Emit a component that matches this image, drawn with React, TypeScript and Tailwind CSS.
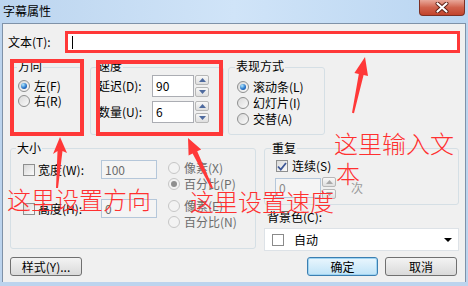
import React from 'react'

function Radio({ checked = false, disabled = false }: { checked?: boolean; disabled?: boolean }) {
  return (
    <span
      className={`w-[12px] h-[12px] shrink-0 rounded-full border flex items-center justify-center ${
        disabled ? 'border-[#c6c6c6] bg-[#f3f3f3]' : 'border-[#8e8f8f] bg-gradient-to-br from-[#d9d9d9] to-[#fbfbfb]'
      }`}
    >
      {checked && (
        <span
          className={`w-[6px] h-[6px] rounded-full ${
            disabled ? 'bg-[#8f8f8f]' : 'bg-[radial-gradient(circle_at_35%_30%,#b4eaff,#2a78cc_55%,#0e3c8a)]'
          }`}
        />
      )}
    </span>
  )
}

function Check({ checked = false }: { checked?: boolean }) {
  return (
    <span className="w-[12px] h-[12px] shrink-0 border border-[#8e8f8f] bg-gradient-to-br from-[#d9d9d9] to-[#fbfbfb] flex items-center justify-center">
      {checked && (
        <svg width="10" height="9" viewBox="0 0 10 9">
          <path d="M1 4.5L3.8 7.5L9 1" fill="none" stroke="#3d5796" strokeWidth="1.8" />
        </svg>
      )}
    </span>
  )
}

function Spin({ disabled = false }: { disabled?: boolean }) {
  const fill = disabled ? '#a9a9a9' : '#4e6a9e'
  return (
    <div className="flex flex-col gap-[2px] ml-[1px]">
      {[0, 1].map((i) => (
        <div
          key={i}
          className="w-[14px] h-[10px] border border-[#b7b7b7] rounded-[2px] bg-gradient-to-b from-[#f8f8f8] to-[#dfdfdf] flex items-center justify-center"
        >
          <svg width="7" height="4" viewBox="0 0 7 4">
            <path d={i === 0 ? 'M3.5 0L7 4H0z' : 'M0 0H7L3.5 4z'} fill={fill} />
          </svg>
        </div>
      ))}
    </div>
  )
}

function Group({
  label,
  className,
  labelClass,
  children,
}: {
  label: string
  className: string
  labelClass: string
  children?: React.ReactNode
}) {
  return (
    <div className={`relative shrink-0 border border-[#d5dfe5] rounded-[3px] ${className}`}>
      <span className={`absolute bg-[#f0f0f0] px-[1px] leading-[14px] ${labelClass}`}>{label}</span>
      {children}
    </div>
  )
}

function RadioRow({ label, checked, disabled, h = 'h-[16px]' }: { label: string; checked?: boolean; disabled?: boolean; h?: string }) {
  return (
    <div className={`flex items-center gap-[4px] ${h}`}>
      <Radio checked={checked} disabled={disabled} />
      <span className={disabled ? 'text-[#6d6d6d]' : ''}>{label}</span>
    </div>
  )
}

export default function App() {
  return (
    <div className="relative w-[468px] h-[286px] overflow-hidden bg-[#bcd4ee] text-[12px] leading-[14px] text-black font-['Noto_Sans_CJK_SC','Liberation_Sans',sans-serif]">
      {/* title bar */}
      <div className="h-[23px] flex justify-between items-start bg-gradient-to-r from-[#bcd5ef] via-[#d0e4f8] to-[#b9d5f1]">
        <span className="pl-[3px] pt-[4px]">字幕属性</span>
        <div className="mr-[3px] w-[46px] h-[16px] rounded-b-[4px] border border-t-0 border-[#7d3024] bg-gradient-to-b from-[#e8a89a] via-[#d0624c] to-[#c2432b] flex items-center justify-center">
          <svg width="14" height="11" viewBox="0 0 14 11">
            <path d="M2.5 1.5L11.5 9.5M11.5 1.5L2.5 9.5" stroke="#5a1e14" strokeWidth="4" strokeLinecap="round" />
            <path d="M2.5 1.5L11.5 9.5M11.5 1.5L2.5 9.5" stroke="#fff" strokeWidth="2.2" strokeLinecap="round" />
          </svg>
        </div>
      </div>

      {/* dialog body */}
      <div className="ml-[2px] w-[464px] h-[259px] border border-b-0 border-[#7f92a8] bg-[#f0f0f0] flex flex-col">
        {/* text row */}
        <div className="flex items-center mt-[7px] h-[22px]">
          <span className="pl-[5px] w-[62px] shrink-0">文本(T):</span>
          <div className="w-[395px] h-[22px] border-[3px] border-[#ff3838] bg-white flex items-center pl-[4px]">
            <span className="w-px h-[13px] bg-black" />
          </div>
        </div>

        {/* direction / speed / mode */}
        <div className="flex items-start mt-[14px] pl-[9px]">
          <Group label="方向" className="w-[70px] h-[68px]" labelClass="left-[4px] -top-[9px]">
            <div className="flex flex-col pt-[10px] pl-[5px]">
              <RadioRow label="左(F)" checked h="h-[15px]" />
              <RadioRow label="右(R)" h="h-[15px]" />
            </div>
          </Group>

          <Group label="速度" className="ml-[8px] w-[134px] h-[68px]" labelClass="left-[6px] -top-[9px]">
            <div className="flex flex-col gap-[4px] pt-[7px] pl-[7px]">
              <div className="flex items-center">
                <span className="w-[54px]">延迟(D):</span>
                <div className="w-[42px] h-[22px] border border-[#abadb3] bg-white flex items-center pl-[3px]">90</div>
                <Spin />
              </div>
              <div className="flex items-center">
                <span className="w-[54px]">数量(U):</span>
                <div className="w-[42px] h-[22px] border border-[#abadb3] bg-white flex items-center pl-[3px]">6</div>
                <Spin />
              </div>
            </div>
          </Group>

          <Group label="表现方式" className="ml-[4px] w-[97px] h-[68px]" labelClass="left-[6px] -top-[9px]">
            <div className="flex flex-col pt-[11px] pl-[8px]">
              <RadioRow label="滚动条(L)" checked />
              <RadioRow label="幻灯片(I)" />
              <RadioRow label="交替(A)" />
            </div>
          </Group>
        </div>

        {/* size / repeat / background */}
        <div className="flex items-start mt-[13px] pl-[7px]">
          <Group label="大小" className="w-[246px] h-[101px]" labelClass="left-[5px] -top-[8px]">
            <div className="flex flex-col pt-[11px] pl-[12px]">
              <div className="flex items-start">
                <div className="flex items-center h-[19px]">
                  <Check />
                  <span className="ml-[3px] w-[63px]">宽度(W):</span>
                  <div className="w-[56px] h-[19px] border border-[#b5c7da] bg-[#f4f4f4] text-[#6d6d6d] flex items-center pl-[3px]">100</div>
                </div>
                <div className="ml-[11px] flex flex-col">
                  <RadioRow label="像素(X)" disabled />
                  <RadioRow label="百分比(P)" checked disabled />
                </div>
              </div>
              <div className="flex items-start mt-[6px]">
                <div className="flex items-center h-[19px] mt-[1px]">
                  <Check />
                  <span className="ml-[3px] w-[63px]">高度(H):</span>
                  <div className="w-[56px] h-[19px] border border-[#b5c7da] bg-[#f4f4f4] text-[#6d6d6d] flex items-center pl-[3px]">0</div>
                </div>
                <div className="ml-[11px] flex flex-col">
                  <RadioRow label="像素(E)" disabled />
                  <RadioRow label="百分比(N)" disabled />
                </div>
              </div>
            </div>
          </Group>

          <div className="ml-[8px] w-[195px] flex flex-col">
            <Group label="重复" className="w-[195px] h-[57px]" labelClass="left-[6px] -top-[8px]">
              <div className="flex flex-col pt-[10px] pl-[10px]">
                <div className="flex items-center gap-[4px] h-[14px] ml-[1px]">
                  <Check checked />
                  <span>连续(S)</span>
                </div>
                <div className="flex items-center mt-[4px]">
                  <div className="w-[46px] h-[20px] border border-[#b5c7da] bg-[#f4f4f4] text-[#8a8a8a] flex items-center pl-[3px]">0</div>
                  <Spin disabled />
                  <span className="ml-[15px] text-[#9a9a9a]">次</span>
                </div>
              </div>
            </Group>
            <span className="mt-[6px] pl-[3px] leading-[12px]">背景色(C):</span>
            <div className="mt-[5px] h-[23px] border border-[#dde2e7] bg-white flex items-center pl-[7px] pr-[6px]">
              <span className="w-[12px] h-[12px] border border-[#8a8a8a] bg-white" />
              <span className="ml-[10px]">自动</span>
              <svg className="ml-auto" width="8" height="4" viewBox="0 0 8 4">
                <path d="M0 0H8L4 4z" fill="#000" />
              </svg>
            </div>
          </div>
        </div>

        {/* buttons */}
        <div className="flex items-center mt-[6px] pl-[7px] pr-[8px]">
          <button className="w-[72px] h-[19px] border border-[#707070] rounded-[3px] bg-gradient-to-b from-[#f3f3f3] to-[#dadada] flex items-center justify-center">
            样式(Y)...
          </button>
          <button className="ml-auto w-[71px] h-[19px] border border-[#3c7fb1] rounded-[3px] bg-gradient-to-b from-[#eaf6fd] to-[#bfe3f7] shadow-[inset_0_0_0_1px_#9fd4f2] flex items-center justify-center">
            确定
          </button>
          <button className="ml-[7px] w-[72px] h-[19px] border border-[#707070] rounded-[3px] bg-gradient-to-b from-[#f3f3f3] to-[#dadada] flex items-center justify-center">
            取消
          </button>
        </div>
      </div>

      {/* annotations */}
      <div className="absolute left-[10px] top-[59px] w-[74px] h-[77px] border-[4px] border-[#ff3838] pointer-events-none" />
      <div className="absolute left-[96px] top-[60px] w-[127px] h-[76px] border-[4px] border-[#ff3838] pointer-events-none" />
      <svg className="absolute left-0 top-0 pointer-events-none" width="468" height="286" viewBox="0 0 468 286">
        <polygon points="60,137 67,153 62.5,151 58,188 56,188 57.5,151 53,154" fill="#ff3838" />
        <polygon points="188,138 201.2,149.4 197.2,151.3 212.9,187.6 211.1,188.4 192.6,153.5 188.6,155.4" fill="#ff3838" />
        <polygon points="365,57 368,76 363.6,75.1 354,113.2 352,112.8 358.8,74.1 354.4,73.1" fill="#ff3838" />
      </svg>
      <div className="absolute left-[7px] top-[187px] text-[24px] leading-[24px] font-light text-[#ff3030] pointer-events-none">这里设置方向</div>
      <div className="absolute left-[190px] top-[189px] text-[24px] leading-[24px] font-light text-[#ff3030] pointer-events-none">这里设置速度</div>
      <div className="absolute left-[334px] top-[128px] text-[24px] leading-[30px] font-light text-[#ff3030] pointer-events-none">
        这里输入文
        <br />
        <span className="ml-[2px]">本</span>
      </div>
    </div>
  )
}
